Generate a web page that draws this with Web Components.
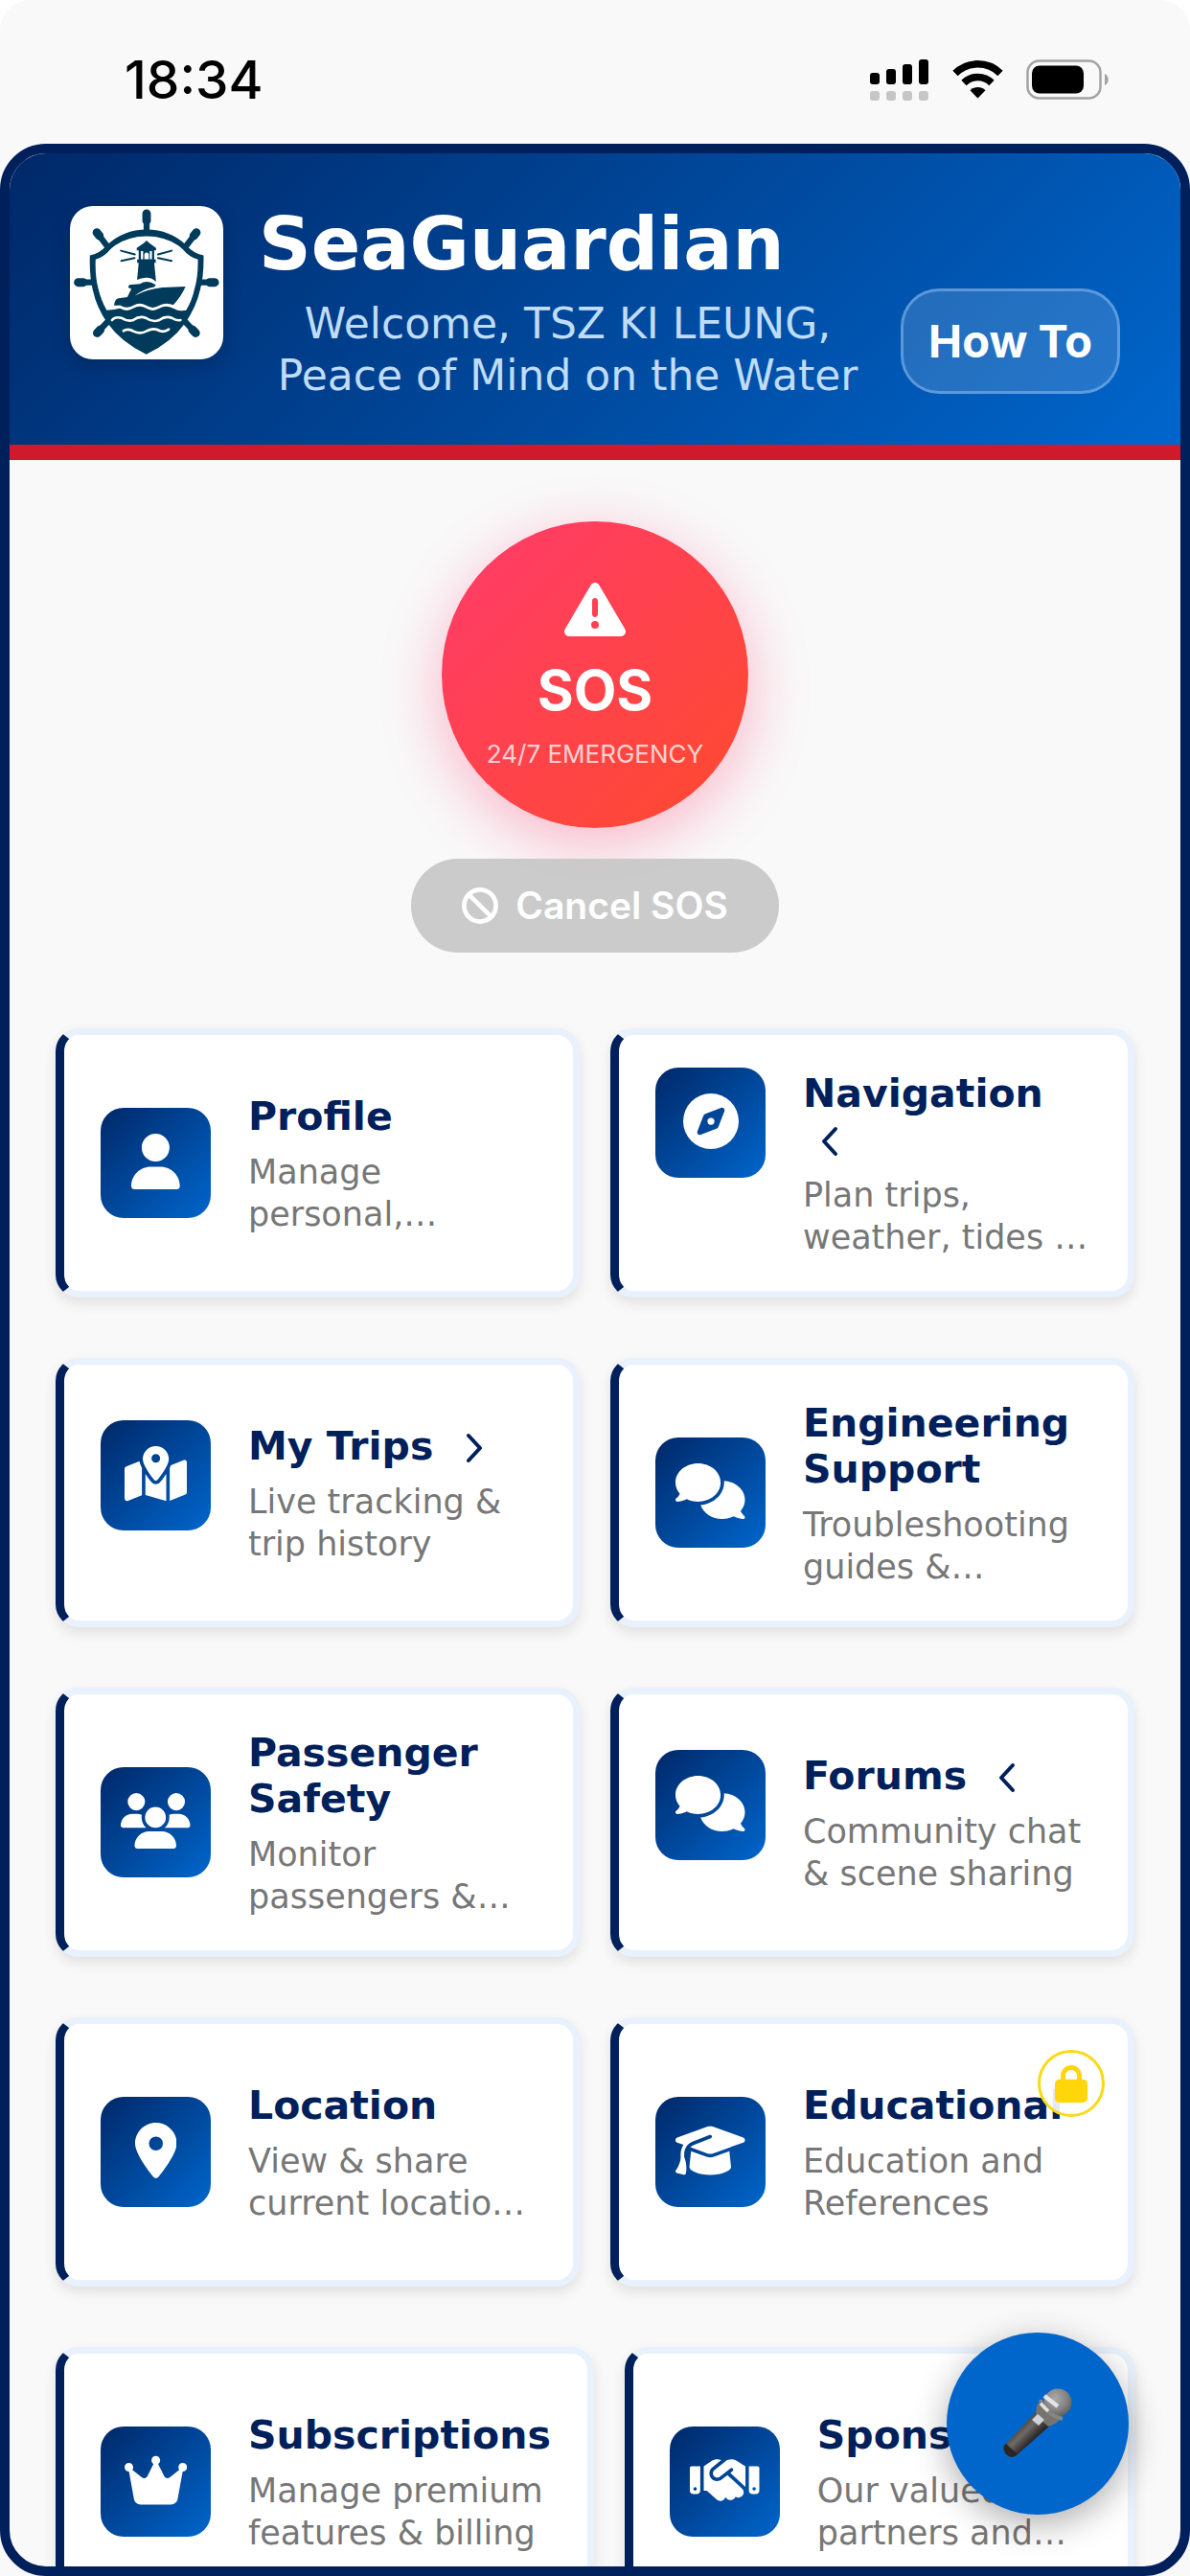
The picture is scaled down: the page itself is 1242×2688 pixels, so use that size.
<!DOCTYPE html>
<html lang="en">
<head>
<meta charset="utf-8">
<meta name="viewport" content="width=device-width, initial-scale=1">
<title>SeaGuardian</title>
<style>
  :root {
    --navy: #00205b;
    --blue: #0066cc;
    --red: #d0192d;
    --page: #f9f9f9;
    --rim: #e8f1fc;
    --muted: #777;
    --brand-gradient: linear-gradient(135deg, #002868 0%, var(--blue) 100%);
    --ui: Inter, "Liberation Sans", sans-serif;
  }
  html, body { margin: 0; height: 100%; }
  body { background: #fff; font-family: "DejaVu Sans", Verdana, sans-serif; }
</style>
</head>
<body>
<sea-app>
  <status-bar slot="status" time="18:34"></status-bar>
  <app-header slot="header">
    <sea-logo slot="logo"></sea-logo>
    <span slot="title">SeaGuardian</span>
    <span slot="welcome">Welcome, TSZ KI LEUNG, Peace of Mind on the Water</span>
    <span slot="action">How To</span>
  </app-header>
  <sos-panel></sos-panel>
  <card-row>
    <menu-card icon="user"><span slot="title">Profile</span>Manage personal,…</menu-card>
    <menu-card icon="compass" chevron="left"><span slot="title">Navigation</span>Plan trips, weather, tides …</menu-card>
  </card-row>
  <card-row>
    <menu-card icon="map" chevron="right"><span slot="title">My Trips</span>Live tracking &amp; trip history</menu-card>
    <menu-card icon="comments"><span slot="title">Engineering Support</span>Troubleshooting guides &amp;…</menu-card>
  </card-row>
  <card-row>
    <menu-card icon="users"><span slot="title">Passenger Safety</span>Monitor passengers &amp;…</menu-card>
    <menu-card icon="comments" chevron="left"><span slot="title">Forums</span>Community chat &amp; scene sharing</menu-card>
  </card-row>
  <card-row>
    <menu-card icon="pin"><span slot="title">Location</span>View &amp; share current locatio…</menu-card>
    <menu-card icon="cap" locked><span slot="title">Educational</span>Education and References</menu-card>
  </card-row>
  <card-row>
    <menu-card icon="crown"><span slot="title">Subscriptions</span>Manage premium features &amp; billing</menu-card>
    <menu-card icon="handshake"><span slot="title">Sponsors</span>Our valued partners and…</menu-card>
  </card-row>
  <voice-button slot="fab"></voice-button>
</sea-app>

<script>
const ICONS = {
  user: [448, "M224 256A128 128 0 1 0 224 0a128 128 0 1 0 0 256zm-45.7 48C79.8 304 0 383.8 0 482.3C0 498.7 13.3 512 29.7 512H418.3c16.4 0 29.7-13.3 29.7-29.7C448 383.8 368.2 304 269.7 304H178.3z"],
  compass: [512, "M256 512A256 256 0 1 0 256 0a256 256 0 1 0 0 512zm50.7-186.9L162.4 380.6c-19.4 7.5-38.5-11.6-31-31l55.5-144.3c3.3-8.5 9.9-15.1 18.4-18.4l144.3-55.5c19.4-7.5 38.5 11.6 31 31L325.1 306.7c-3.2 8.5-9.9 15.1-18.4 18.4zM288 256a32 32 0 1 0 -64 0 32 32 0 1 0 64 0z"],
  map: [576, "M408 120c0 54.6-73.1 151.9-105.2 192c-7.7 9.6-22 9.6-29.6 0C241.1 271.9 168 174.6 168 120C168 53.7 221.7 0 288 0s120 53.7 120 120zm8 80.4c3.5-6.9 6.7-13.8 9.6-20.6c.5-1.2 1-2.5 1.5-3.7l116-46.4C558.9 123.4 576 135 576 152V422.8c0 9.8-6 18.6-15.1 22.3L416 503V200.4zM137.6 138.3c2.4 14.1 7.2 28.3 12.8 41.5c2.9 6.8 6.1 13.7 9.6 20.6V451.8L32.9 502.7C17.1 509 0 497.4 0 480.4V209.6c0-9.8 6-18.6 15.1-22.3l122.6-49zM327.8 332c13.9-17.4 35.7-45.7 56.2-77V504.3L192 449.4V255c20.5 31.3 42.3 59.6 56.2 77c20.5 25.6 59.1 25.6 79.6 0zM288 152a40 40 0 1 0 0-80 40 40 0 1 0 0 80z"],
  comments: [640, "M208 352c114.9 0 208-78.8 208-176S322.9 0 208 0S0 78.8 0 176c0 38.6 14.7 74.3 39.6 103.4c-3.5 9.4-8.7 17.7-14.2 24.7c-4.8 6.2-9.7 11-13.3 14.3c-1.8 1.6-3.3 2.9-4.3 3.7c-.5 .4-.9 .7-1.1 .8l-.2 .2 0 0 0 0C1 327.2-1.4 334.4 .8 340.9S9.1 352 16 352c21.8 0 43.8-5.6 62.1-12.5c9.2-3.5 17.8-7.4 25.3-11.4C134.1 343.3 169.8 352 208 352zM448 176c0 112.3-99.1 196.9-216.5 207C255.8 457.4 336.4 512 432 512c38.2 0 73.9-8.7 104.7-23.9c7.5 4 16 7.9 25.2 11.4c18.3 6.9 40.3 12.5 62.1 12.5c6.9 0 13.1-4.5 15.2-11.1c2.1-6.6-.2-13.8-5.8-17.9l0 0 0 0-.2-.2c-.2-.2-.6-.4-1.1-.8c-1-.8-2.5-2-4.3-3.7c-3.6-3.3-8.5-8.1-13.3-14.3c-5.5-7-10.7-15.4-14.2-24.7c24.9-29 39.6-64.7 39.6-103.4c0-92.8-84.9-168.9-192.6-175.5c.4 5.1 .6 10.3 .6 15.5z"],
  users: [640, "M144 0a80 80 0 1 1 0 160A80 80 0 1 1 144 0zM512 0a80 80 0 1 1 0 160A80 80 0 1 1 512 0zM0 298.7C0 239.8 47.8 192 106.7 192h42.7c15.9 0 31 3.5 44.6 9.7c-1.3 7.2-1.9 14.7-1.9 22.3c0 38.2 16.8 72.5 43.3 96c-.2 0-.4 0-.7 0H21.3C9.6 320 0 310.4 0 298.7zM405.3 320c-.2 0-.4 0-.7 0c26.6-23.5 43.3-57.8 43.3-96c0-7.6-.7-15-1.9-22.3c13.6-6.3 28.7-9.7 44.6-9.7h42.7C592.2 192 640 239.8 640 298.7c0 11.8-9.6 21.3-21.3 21.3H405.3zM224 224a96 96 0 1 1 192 0 96 96 0 1 1 -192 0zM128 485.3C128 411.7 187.7 352 261.3 352H378.7C452.3 352 512 411.7 512 485.3c0 14.7-11.9 26.7-26.7 26.7H154.7c-14.7 0-26.7-11.9-26.7-26.7z"],
  pin: [384, "M215.7 499.2C267 435 384 279.4 384 192C384 86 298 0 192 0S0 86 0 192c0 87.4 117 243 168.3 307.2c12.3 15.3 35.1 15.3 47.4 0zM192 128a64 64 0 1 1 0 128 64 64 0 1 1 0-128z"],
  cap: [640, "M320 32c-8.1 0-16.1 1.4-23.7 4.1L15.8 137.4C6.3 140.9 0 149.9 0 160s6.3 19.1 15.8 22.6l57.9 20.9C57.3 229.3 48 259.8 48 291.9v28.1c0 28.4-10.8 57.7-22.3 80.8c-6.5 13-13.9 25.8-22.5 37.6C0 442.7-.9 448.3 .9 453.4s6 8.9 11.2 10.2l64 16c4.2 1.1 8.7 .3 12.4-2s6.3-6.1 7.1-10.4c8.6-42.8 4.3-81.2-2.1-108.7C90.3 344.3 86 329.8 80 316.5V291.9c0-30.2 10.2-58.7 27.9-81.5c12.9-15.5 29.6-28 49.2-35.7l157-61.7c8.2-3.2 17.5 .8 20.7 9s-.8 17.5-9 20.7l-157 61.7c-12.4 4.9-23.3 12.4-32.2 21.6l159.6 57.6c7.6 2.7 15.6 4.1 23.7 4.1s16.1-1.4 23.7-4.1L624.2 182.6c9.5-3.4 15.8-12.5 15.8-22.6s-6.3-19.1-15.8-22.6L343.7 36.1C336.1 33.4 328.1 32 320 32zM128 408c0 35.3 86 72 192 72s192-36.7 192-72L496.7 262.6 354.5 314c-11.1 4-22.8 6-34.5 6s-23.5-2-34.5-6L143.3 262.6 128 408z"],
  crown: [576, "M309 106c11.4-7 19-19.7 19-34c0-22.1-17.9-40-40-40s-40 17.9-40 40c0 14.4 7.6 27 19 34L209.7 220.6c-9.1 18.2-32.7 23.4-48.6 10.7L72 160c5-6.7 8-15 8-24c0-22.1-17.9-40-40-40S0 113.9 0 136s17.9 40 40 40c.2 0 .5 0 .7 0L86.4 427.4c5.5 30.4 32 52.6 63 52.6H426.6c30.9 0 57.4-22.1 63-52.6L535.3 176c.2 0 .5 0 .7 0c22.1 0 40-17.9 40-40s-17.9-40-40-40s-40 17.9-40 40c0 9 3 17.3 8 24l-89.1 71.3c-15.9 12.7-39.5 7.5-48.6-10.7L309 106z"],
  handshake: [640, "M323.4 85.2l-96.8 78.4c-16.1 13-19.2 36.4-7 53.1c12.9 17.8 38 21.3 55.3 7.8l99.3-77.2c7-5.4 17-4.2 22.5 2.8s4.2 17-2.8 22.5l-20.9 16.2L512 316.8V128h-.7l-3.9-2.5L434.8 79c-15.3-9.8-33.2-15-51.4-15c-21.8 0-43 7.5-60 21.2zm22.8 124.4l-51.7 40.2C263 274.3 217.3 268 193.7 235.6c-22.2-30.5-16.6-73.1 12.7-96.8l83.2-67.3c-11.6-4.9-24.1-7.4-36.8-7.4C234 64 215.7 69.6 200 80l-72 48V352h28.2l91.4 83.4c19.6 17.9 49.9 16.5 67.8-3.1c5.5-6.1 9.2-13.2 11.1-20.6l17 15.6c19.5 17.9 49.9 16.6 67.8-2.9c4.5-4.9 7.8-10.6 9.9-16.5c19.4 13 45.8 10.3 62.1-7.5c17.9-19.5 16.6-49.9-2.9-67.8l-134.2-123zM16 128c-8.8 0-16 7.2-16 16V352c0 17.7 14.3 32 32 32H64c17.7 0 32-14.3 32-32V128H16zM48 320a16 16 0 1 1 0 32 16 16 0 1 1 0-32zM544 128V352c0 17.7 14.3 32 32 32h32c17.7 0 32-14.3 32-32V144c0-8.8-7.2-16-16-16H544zm32 208a16 16 0 1 1 32 0 16 16 0 1 1 -32 0z"],
  warning: [512, "M256 32c14.2 0 27.3 7.5 34.5 19.8l216 368c7.3 12.4 7.3 27.7 .2 40.1S486.3 480 472 480H40c-14.3 0-27.6-7.7-34.7-20.1s-7-27.8 .2-40.1l216-368C228.7 39.5 241.8 32 256 32zm0 128c-13.3 0-24 10.7-24 24V296c0 13.3 10.7 24 24 24s24-10.7 24-24V184c0-13.3-10.7-24-24-24zm32 224a32 32 0 1 0 -64 0 32 32 0 1 0 64 0z"],
  ban: [512, "M367.2 412.5L99.5 144.8C77.1 176.1 64 214.5 64 256c0 106 86 192 192 192c41.5 0 79.9-13.1 111.2-35.5zm45.3-45.3C434.9 335.9 448 297.5 448 256c0-106-86-192-192-192c-41.5 0-79.9 13.1-111.2 35.5L412.5 367.2zM0 256a256 256 0 1 1 512 0A256 256 0 1 1 0 256z"],
  lock: [448, "M144 144v48H304V144c0-44.2-35.8-80-80-80s-80 35.8-80 80zM80 192V144C80 64.5 144.5 0 224 0s144 64.5 144 144v48h16c35.3 0 64 28.7 64 64V448c0 35.3-28.7 64-64 64H64c-35.3 0-64-28.7-64-64V256c0-35.3 28.7-64 64-64H80z"]
};

const icon = (name) => {
  const [w, d] = ICONS[name];
  return `<svg viewBox="0 0 ${w} 512" fill="currentColor" aria-hidden="true"><path d="${d}"/></svg>`;
};

const define = (tag, render) => customElements.define(tag, class extends HTMLElement {
  constructor() {
    super();
    this.attachShadow({ mode: "open" });
  }
  connectedCallback() {
    this.shadowRoot.innerHTML = render(this);
  }
});

define("sea-app", () => `
  <style>
    :host { display: flex; flex-direction: column; height: 100vh; background: var(--page); border-radius: 32px 32px 0 0; overflow: hidden; }
    .frame { position: relative; flex: 1; min-height: 0; box-sizing: border-box; border: 10px solid var(--navy); border-radius: 48px; overflow: hidden; }
    main { padding: 0 48px; }
    .fab { position: absolute; right: 54px; bottom: 54px; }
  </style>
  <slot name="status"></slot>
  <div class="frame">
    <slot name="header"></slot>
    <main><slot></slot></main>
    <div class="fab"><slot name="fab"></slot></div>
  </div>`);

define("status-bar", (el) => `
  <style>
    :host { display: flex; align-items: center; justify-content: space-between; height: 150px; padding: 16px 84px 0 130px; box-sizing: border-box; font: 500 55px/64px var(--ui); color: #000; }
    .icons { display: flex; align-items: center; gap: 24px; }
    svg { display: block; }
  </style>
  <time>${el.getAttribute("time")}</time>
  <div class="icons">
    <svg width="62" height="46" viewBox="0 0 62 46">
      <rect x="0" y="16" width="10" height="12" rx="3"/><rect x="17" y="12" width="10" height="16" rx="3"/>
      <rect x="34" y="7" width="10" height="21" rx="3"/><rect x="51" y="2" width="10" height="26" rx="3"/>
      <g fill="#c6c6c6"><rect x="0" y="35" width="10" height="10" rx="3"/><rect x="17" y="35" width="10" height="10" rx="3"/><rect x="34" y="35" width="10" height="10" rx="3"/><rect x="51" y="35" width="10" height="10" rx="3"/></g>
    </svg>
    <svg width="53" height="40" viewBox="0 0 53 40">
      <g fill="none" stroke="#000" stroke-width="7.5"><path d="M3 13.5A33.5 33.5 0 0 1 50 13.5"/><path d="M12 23.5A20.5 20.5 0 0 1 41 23.5"/></g>
      <path d="M26.5 39.5L18.5 31.3a11.5 11.5 0 0 1 16 0z"/>
    </svg>
    <svg width="87" height="42" viewBox="0 0 87 42">
      <rect x="1.5" y="1.5" width="76" height="39" rx="12" fill="none" stroke="#a3a3a3" stroke-width="2.5"/>
      <rect x="6" y="6.5" width="54" height="29" rx="8"/>
      <path d="M82 15c5 2 5 10 0 12z" fill="#a3a3a3"/>
    </svg>
  </div>`);

define("app-header", () => `
  <style>
    :host { display: block; }
    header { display: flex; align-items: flex-start; padding: 55px 63px 45px; background: var(--brand-gradient); border-bottom: 16px solid var(--red); }
    .text { flex: 1; min-width: 0; margin: 0 25px 0 37px; }
    h1 { margin: 0 0 16px; font-size: 76px; line-height: 80px; font-weight: 700; color: #fff; }
    p { margin: 0; padding: 0 12px; font-size: 44px; line-height: 54px; text-align: center; color: #bfdcf8; }
    button { align-self: flex-end; margin: 0 0 8px; height: 110px; padding: 0 26px; border: 3px solid rgba(130, 180, 235, .6); border-radius: 40px; background: rgba(255, 255, 255, .14); color: #fff; font: 700 47px/54px var(--ui); white-space: nowrap; }
  </style>
  <header>
    <slot name="logo"></slot>
    <div class="text">
      <h1><slot name="title"></slot></h1>
      <p><slot name="welcome"></slot></p>
    </div>
    <button type="button"><slot name="action"></slot></button>
  </header>`);

define("sea-logo", () => `
  <style>
    :host { display: block; flex: none; width: 160px; height: 160px; border-radius: 24px; background: #fff; box-shadow: 0 6px 20px rgba(0, 0, 0, .2); }
    svg { display: block; width: 100%; height: 100%; }
  </style>
  <svg viewBox="38 47 484 484" role="img" aria-label="SeaGuardian logo">
    <g fill="none" stroke="#003b5c" stroke-linecap="round" stroke-width="27">
      <path d="M280 71v22M123 131l8 10M437 131l-8 10M64 288h16M495 288h-16M124 448l10-11M435 448l-10-11"/>
      <path stroke-width="19" d="M280 90v40M131 141l24 32M429 141l-24 32M80 288h28M480 288h-28M134 437l28-30M425 437l-28-30"/>
    </g>
    <path fill="#003b5c" d="M101 203Q132 196 152 173Q205 121 280 121Q355 121 408 173Q428 196 460 203Q461 268 449 312Q436 368 402 416Q358 478 279 515Q201 478 156 416Q122 368 110 312Q99 268 101 203Z"/>
    <path fill="#fff" d="M119 216Q148 206 166 183Q212 142 280 142Q348 142 394 183Q412 206 442 216Q443 268 432 306Q424 345 405 376Q383 381 362 369Q341 358 320 370Q299 383 279 370Q258 357 238 370Q217 383 196 370Q179 375 154 376Q136 345 127 306Q117 268 119 216Z"/>
    <g fill="#003b5c">
      <path d="M280 157q4 0 6 5l24 17v8h-6v29h5v10h-5l6 60q-14-14-32-13q-16 1-28 7l5-54h-5v-10h5v-29h-6v-8l25-17q2-5 6-5z"/>
      <path d="M177 360Q180 339 192 338L219 334L232 309L222 304L225 296L259 293Q282 278 309 296Q307 304 290 306Q262 315 243 330Q280 309 330 304L403 301Q388 335 364 359Q341 349 320 361Q299 374 279 361Q258 348 238 361Q217 374 196 360Q186 362 177 360Z"/>
    </g>
    <path fill="#fff" d="M262 189h7v26h-7zM290 189h7v26h-7zM273 215v-17q7-8 14 0v17z"/>
    <g fill="none" stroke="#003b5c" stroke-width="6" stroke-linecap="round"><path d="M199 188l44 12M200 220l42-9M359 188l-43 12M359 220l-43-9"/></g>
    <g fill="none" stroke="#fff" stroke-width="8" stroke-linecap="round">
      <path d="M171 407Q181 395 200 400Q220 413 238 407Q258 392 279 401Q299 415 320 407Q340 392 361 401Q374 410 387 407"/>
      <path d="M207 441Q222 432 240 443Q262 453 281 441Q303 430 322 441Q337 446 350 436"/>
    </g>
  </svg>`);

define("sos-panel", () => `
  <style>
    :host { display: flex; flex-direction: column; align-items: center; gap: 32px; padding: 64px 0 79px; font-family: var(--ui); }
    button { border: 0; color: #fff; font-family: inherit; }
    svg { display: block; }
    .sos { display: flex; flex-direction: column; align-items: center; width: 320px; height: 320px; padding: 60px 0 0; border-radius: 50%; background: linear-gradient(135deg, #ff3b6b 0%, #ff4a2d 100%); box-shadow: 0 16px 64px rgba(255, 20, 90, .3); }
    .sos svg { width: 64px; height: 64px; margin-bottom: 16px; }
    strong { font-size: 58px; line-height: 72px; font-weight: 700; }
    small { margin-top: 15px; font-size: 26px; line-height: 32px; opacity: .75; }
    .cancel { display: flex; align-items: center; gap: 18px; height: 98px; padding: 0 53px; border-radius: 49px; background: rgba(195, 195, 195, .85); font-size: 39px; line-height: 48px; font-weight: 600; }
    .cancel svg { width: 38px; height: 38px; }
  </style>
  <button class="sos" type="button">${icon("warning")}<strong>SOS</strong><small>24/7 EMERGENCY</small></button>
  <button class="cancel" type="button">${icon("ban")}<span>Cancel SOS</span></button>`);

define("card-row", () => `
  <style>
    :host { display: flex; gap: 32px; margin-bottom: 63px; }
    ::slotted(*) { flex: 1 1 0; }
  </style>
  <slot></slot>`);

const CHEVRONS = { left: "M18 3L6 16L18 29", right: "M6 3L18 16L6 29" };

define("menu-card", (el) => {
  const dir = el.getAttribute("chevron");
  const chevron = dir ? ` <svg class="chevron" viewBox="0 0 24 32" aria-hidden="true"><path d="${CHEVRONS[dir]}"/></svg>` : "";
  const lock = el.hasAttribute("locked") ? `<span class="lock">${icon("lock")}</span>` : "";
  return `
  <style>
    :host { display: block; }
    a { position: relative; display: flex; align-items: center; min-height: 281px; box-sizing: border-box; padding: 0 38px; border: 7px solid var(--rim); border-left: 9px solid var(--navy); border-radius: 24px; background: #fff; box-shadow: 0 6px 14px rgba(0, 0, 0, .1); text-decoration: none; }
    .body { display: flex; align-items: ${dir ? "flex-start" : "center"}; gap: 39px; width: 100%; }
    .tile { flex: none; display: flex; align-items: center; justify-content: center; width: 115px; height: 115px; padding-bottom: 4px; box-sizing: border-box; border-radius: 24px; background: var(--brand-gradient); color: #fff; }
    .tile svg { display: block; height: 58px; }
    .text { flex: 1; padding-top: 3px; }
    h2 { margin: 0 0 12px; font-size: 41px; line-height: 48px; font-weight: 700; color: var(--navy); }
    p { margin: 0; font-size: 35px; line-height: 44px; color: var(--muted); }
    .chevron { width: 24px; height: 32px; margin: 0 12px 0 16px; vertical-align: -4px; fill: none; stroke: currentColor; stroke-width: 4; stroke-linecap: round; stroke-linejoin: round; }
    .lock { position: absolute; top: 27px; right: 24px; display: flex; align-items: center; justify-content: center; width: 70px; height: 70px; box-sizing: border-box; border: 3px solid #fbd914; border-radius: 50%; background: rgba(255, 255, 255, .9); color: #ffd60a; }
    .lock svg { height: 39px; }
  </style>
  <a href="#${el.getAttribute("icon")}">
    <div class="body">
      <span class="tile">${icon(el.getAttribute("icon"))}</span>
      <div class="text">
        <h2><slot name="title"></slot>${chevron}</h2>
        <p><slot></slot></p>
      </div>
    </div>
    ${lock}
  </a>`;
});

define("voice-button", () => `
  <style>
    :host { display: block; }
    button { display: flex; align-items: center; justify-content: center; width: 190px; height: 190px; padding: 0; border: 0; border-radius: 50%; background: var(--blue); box-shadow: 0 10px 36px rgba(0, 0, 0, .32); }
    svg { display: block; width: 74px; height: 74px; }
  </style>
  <button type="button" aria-label="Voice assistant">
    <svg viewBox="0 0 74 74" aria-hidden="true">
      <defs>
        <linearGradient id="b" gradientUnits="userSpaceOnUse" x1="20" y1="38" x2="34" y2="52"><stop offset="0" stop-color="#4a4542"/><stop offset=".4" stop-color="#6f6a66"/><stop offset="1" stop-color="#2b2725"/></linearGradient>
        <radialGradient id="h" cx=".4" cy=".35" r=".7"><stop offset="0" stop-color="#a9a9a9"/><stop offset=".6" stop-color="#858585"/><stop offset="1" stop-color="#5d5d5d"/></radialGradient>
      </defs>
      <path fill="url(#b)" d="M35 25L50 39L15 70Q10 74 5 70Q0 65 2 60Z"/>
      <path fill="#2a2624" d="M4 58L16 69Q10 74 5 70Q0 65 2 60Z"/>
      <path fill="#77736f" d="M38 15L60 33Q56 38 48 40L36 29Q34 20 38 15Z"/>
      <circle cx="58" cy="15" r="14.500" fill="url(#h)"/>
      <path fill="none" stroke="#858585" stroke-width="4" d="M40 12Q44 27 63 32"/>
      <path fill="none" stroke="#e4e4e4" stroke-width="4.500" d="M44 8L58 19"/>
      <path fill="none" stroke="#e4e4e4" stroke-width="3.500" d="M40 16L48 24"/>
      <path fill="#cfd4d8" d="M37 27L44 33L38 39L31 33Z"/>
    </svg>
  </button>`);
</script>
</body>
</html>
